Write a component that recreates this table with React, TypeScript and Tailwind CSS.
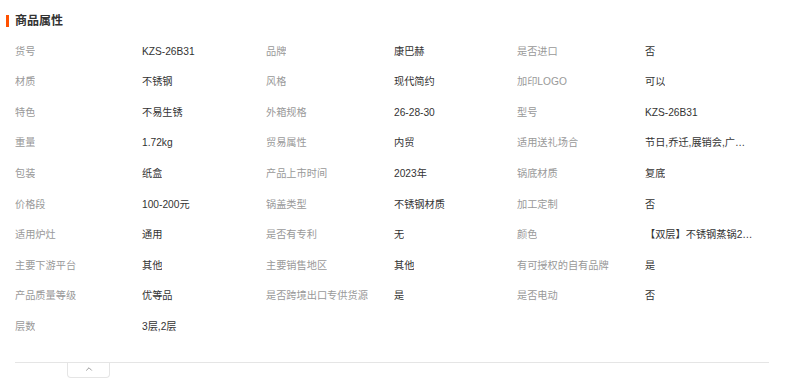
import { ChevronUp } from 'lucide-react';

const rows: [string, string, string, string, string, string][] = [
  ['货号', 'KZS-26B31', '品牌', '康巴赫', '是否进口', '否'],
  ['材质', '不锈钢', '风格', '现代简约', '加印LOGO', '可以'],
  ['特色', '不易生锈', '外箱规格', '26-28-30', '型号', 'KZS-26B31'],
  ['重量', '1.72kg', '贸易属性', '内贸', '适用送礼场合', '节日,乔迁,展销会,广告促销,商务馈赠'],
  ['包装', '纸盒', '产品上市时间', '2023年', '锅底材质', '复底'],
  ['价格段', '100-200元', '锅盖类型', '不锈钢材质', '加工定制', '否'],
  ['适用炉灶', '通用', '是否有专利', '无', '颜色', '【双层】不锈钢蒸锅26cm'],
  ['主要下游平台', '其他', '主要销售地区', '其他', '有可授权的自有品牌', '是'],
  ['产品质量等级', '优等品', '是否跨境出口专供货源', '是', '是否电动', '否'],
  ['层数', '3层,2层', '', '', '', ''],
];

export default function App() {
  return (
    <div className="w-[790px] h-[392px] bg-white text-[10.2px] font-['Liberation_Sans','Noto_Sans_CJK_SC',sans-serif]">
      {/* 标题 */}
      <div className="flex items-center h-[22px] mt-[10px] pl-[6px]">
        <div className="w-[3px] h-[12px] bg-[#ff5000]"></div>
        <span className="ml-[6px] text-[12px] font-bold text-[#333]">商品属性</span>
      </div>

      {/* 属性表 */}
      <div className="pl-[15px] pr-[21px] mt-[4px]">
        <div className="grid grid-cols-[127px_124px_128px_123px_128px_108px]">
          {rows.map((r, i) =>
            r.map((cell, j) => (
              <div
                key={`${i}-${j}`}
                className={`h-[30.6px] flex items-center min-w-0 ${j % 2 === 0 ? 'text-[#999]' : 'text-[#333]'}`}
              >
                <span className="truncate">{cell}</span>
              </div>
            ))
          )}
        </div>

        {/* 收起 */}
        <div className="mt-[20px] border-t border-[#e5e5e5]">
          <div className="ml-[52px] w-[43px] h-[15px] border border-t-0 border-[#e5e5e5] rounded-b-[4px] flex items-center justify-center">
            <ChevronUp className="w-[10px] h-[10px] text-[#888] -mt-[2px]" strokeWidth={2} />
          </div>
        </div>
      </div>
    </div>
  );
}
